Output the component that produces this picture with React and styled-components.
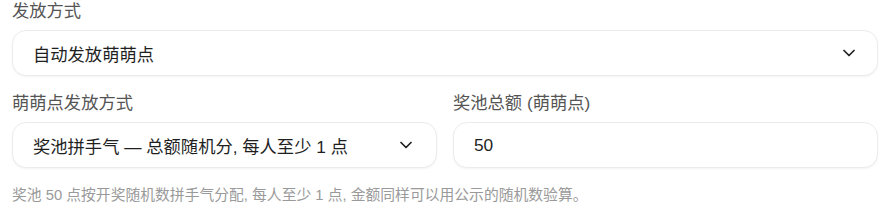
import React from 'react'
import styled, { createGlobalStyle } from 'styled-components'

const GlobalStyle = createGlobalStyle`
	body {
		margin: 0;
		background: #ffffff;
		font-family: "Liberation Sans", "Noto Sans CJK SC", sans-serif;
	}
`

const Wrapper = styled.div`
	display: flex;
	flex-direction: column;
	gap: 16px;
	width: 866px;
	padding-left: 12px;
`

const Row = styled.div`
	display: grid;
	grid-template-columns: 1fr 1fr;
	gap: 16px;
`

const Field = styled.div`
	display: flex;
	flex-direction: column;
	gap: 8px;
`

const Label = styled.div`
	font-size: 17.3px;
	line-height: 22px;
	color: #555555;
`

const Box = styled.div`
	display: flex;
	align-items: center;
	justify-content: space-between;
	height: 46px;
	box-sizing: border-box;
	padding: 0 ${p => p.$padRight || 20}px 0 20px;
	border: 1px solid #ececec;
	border-radius: 14px;
	background: #fff;
	box-shadow: 0 1px 2px rgba(0, 0, 0, 0.05);
	font-size: 17.3px;
	color: #1f1f1f;
`

const Hint = styled.div`
	margin-top: 1px;
	font-size: 14.8px;
	line-height: 20px;
	color: #9a9a9a;
`

const Chevron = () => (
	<svg width="12" height="8" viewBox="0 0 12 8" fill="none">
		<path d="M1 1.5 L6 6.5 L11 1.5" stroke="#222" strokeWidth="1.7" strokeLinecap="round" strokeLinejoin="round"/>
	</svg>
)

const App = () =>
{
	return (
		<>
		<GlobalStyle/>
		<Wrapper>
			<Field>
				<Label>发放方式</Label>
				<Box $padRight={22}>
					<span>自动发放萌萌点</span>
					<Chevron/>
				</Box>
			</Field>
			<Row>
				<Field>
					<Label>萌萌点发放方式</Label>
					<Box $padRight={24}>
						<span>奖池拼手气 — 总额随机分, 每人至少 1 点</span>
						<Chevron/>
					</Box>
				</Field>
				<Field>
					<Label>奖池总额 (萌萌点)</Label>
					<Box>
						<span>50</span>
					</Box>
				</Field>
			</Row>
			<Hint>奖池 50 点按开奖随机数拼手气分配, 每人至少 1 点, 金额同样可以用公示的随机数验算。</Hint>
		</Wrapper>
		</>
	)
}

export default App
